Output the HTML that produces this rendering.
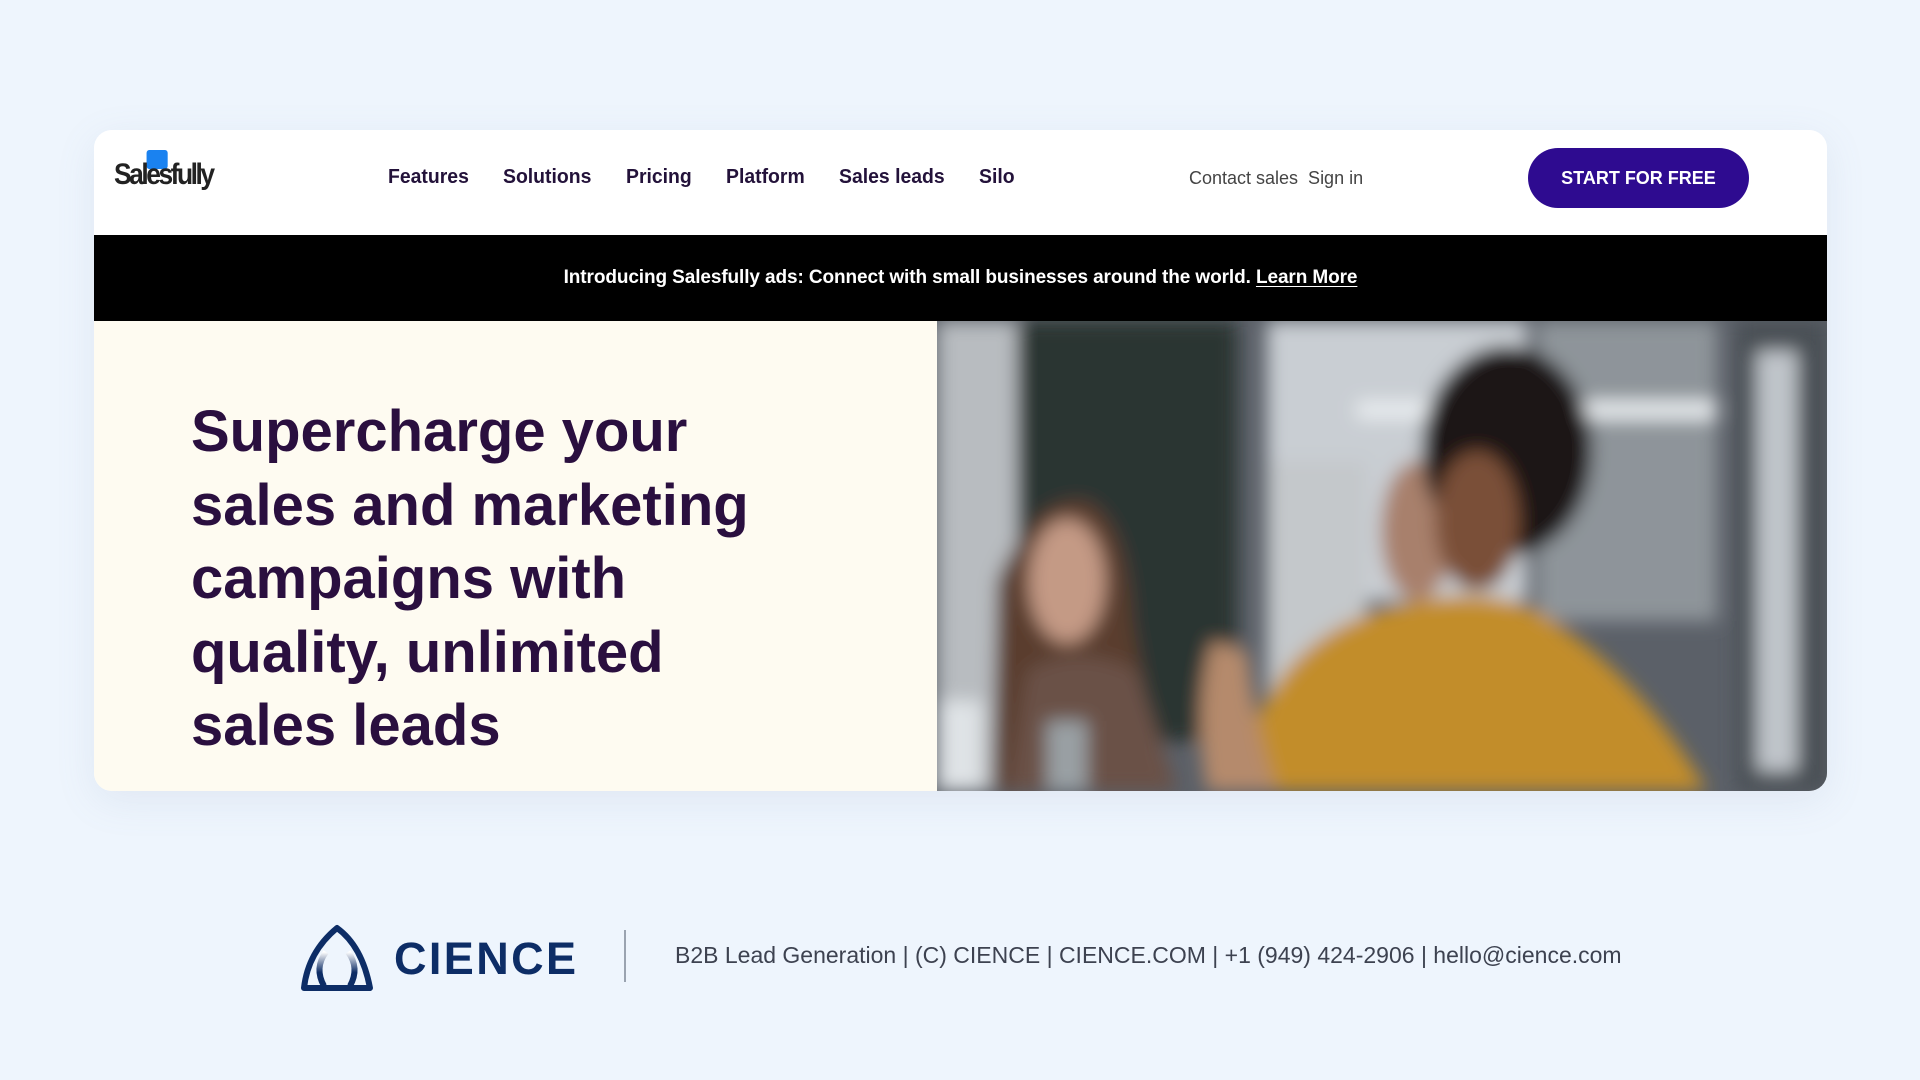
<!DOCTYPE html>
<html><head><meta charset="utf-8"><style>
*{margin:0;padding:0;box-sizing:border-box}
body{width:1920px;height:1080px;background:#eef5fd;font-family:"Liberation Sans",sans-serif;position:relative;overflow:hidden}
.card{position:absolute;left:94px;top:130px;width:1733px;height:661px;border-radius:18px;overflow:hidden;background:#fff;box-shadow:0 10px 40px rgba(120,140,170,.12)}
.nav{position:absolute;left:0;top:0;width:100%;height:105px;background:#fff}
.logo{position:absolute;left:20px;top:28px;font-size:30px;font-weight:bold;letter-spacing:-2.8px;color:#222;transform:scaleX(.88);transform-origin:left}
.logo i{position:absolute;left:37px;top:-8px;width:24px;height:19px;background:#1a82f0;border-radius:3px}
.logo span{position:relative}
.menu{position:absolute;top:36px;font-size:20px;font-weight:bold;color:#23123a;transform:scaleX(.97);transform-origin:left}
.cs{position:absolute;top:38px;left:1095px;font-size:18px;color:#444}
.btn{position:absolute;left:1434px;top:18px;width:221px;height:60px;border-radius:30px;background:#2e0b90;color:#fff;font-weight:bold;font-size:18px;text-align:center;line-height:60px}
.ban{position:absolute;left:0;top:105px;width:100%;height:86px;background:#000;color:#fff;font-size:19px;font-weight:bold;text-align:center;line-height:86px;letter-spacing:-.1px}
.ban u{text-underline-offset:3px}
.hero{position:absolute;left:0;top:191px;width:843px;height:470px;background:#fefbf1}
.hero h1{position:absolute;left:97px;top:74px;font-size:58px;line-height:73.5px;color:#2a0f3f;font-weight:bold}
.photo{position:absolute;left:843px;top:191px;width:890px;height:470px}
.cl{position:absolute;left:300px;top:922px}
.div{position:absolute;left:624px;top:930px;width:2px;height:52px;background:#9aa3b0}
.ft{position:absolute;left:675px;top:942px;font-size:23px;color:#3d4250}
</style></head><body>
<div class="card">
 <div class="nav">
  <div class="logo"><i></i><span>Salesfully</span></div>
  <div class="menu" style="left:294px">Features</div>
  <div class="menu" style="left:409px">Solutions</div>
  <div class="menu" style="left:532px">Pricing</div>
  <div class="menu" style="left:632px">Platform</div>
  <div class="menu" style="left:745px">Sales leads</div>
  <div class="menu" style="left:885px">Silo</div>
  <div class="cs">Contact sales&nbsp; Sign in</div>
  <div class="btn">START FOR FREE</div>
 </div>
 <div class="ban">Introducing Salesfully ads: Connect with small businesses around the world. <u>Learn More</u></div>
 <div class="hero"><h1>Supercharge your<br>sales and marketing<br>campaigns with<br>quality, unlimited<br>sales leads</h1></div>
 <svg class="photo" viewBox="0 0 890 470">
  <defs><filter id="b"><feGaussianBlur stdDeviation="9"/></filter></defs>
  <rect width="890" height="470" fill="#5b6068"/>
  <g filter="url(#b)">
   <rect x="0" y="0" width="80" height="470" fill="#b8bcc0"/>
   <rect x="80" y="0" width="220" height="420" fill="#2c3530"/>
   <rect x="330" y="0" width="260" height="280" fill="#c9ced3"/>
   <rect x="330" y="140" width="100" height="260" fill="#c4c8cb"/>
   <rect x="600" y="0" width="180" height="300" fill="#8e949a"/>
   <rect x="420" y="80" width="360" height="18" fill="#e8ecef"/>
   <rect x="800" y="0" width="90" height="470" fill="#4a4f55"/>
   <rect x="820" y="30" width="40" height="420" fill="#c0c5ca"/>
   <path d="M55 470 L60 260 Q100 170 150 180 Q190 200 195 300 L225 470Z" fill="#5a3e2e"/>
   <ellipse cx="130" cy="260" rx="38" ry="62" fill="#c49a85"/>
   <path d="M90 350 Q140 320 200 350 L240 470 L70 470Z" fill="#6b5146"/>
   <rect x="0" y="380" width="45" height="90" fill="#dfe3e6"/>
   <ellipse cx="480" cy="210" rx="36" ry="70" fill="#a8806c"/>
   <path d="M380 470 L400 340 Q460 310 530 330 L540 470Z" fill="#151a28"/>
   <path d="M300 470 Q320 330 440 290 Q540 260 600 290 Q700 350 770 470Z" fill="#c28d2b"/>
   <ellipse cx="570" cy="130" rx="85" ry="105" fill="#1d1917"/>
   <ellipse cx="540" cy="200" rx="42" ry="70" fill="#7a4f38"/>
   <path d="M270 470 Q255 380 275 320 L310 330 Q320 420 340 470Z" fill="#b58a6c"/>
   <rect x="110" y="400" width="40" height="70" fill="#9aa0a4"/>
  </g>
 </svg>
</div>
<svg class="cl" width="300" height="72" viewBox="0 0 300 72">
 <defs><linearGradient id="g" x1="0" y1="0" x2="0" y2="1"><stop offset="0" stop-color="#fff"/><stop offset=".6" stop-color="#0d2d66"/></linearGradient></defs>
 <path d="M37 6 Q62 24 70 66 L4 66 Q8 30 37 6Z" fill="none" stroke="#0d2d66" stroke-width="6" stroke-linejoin="round"/>
 <path d="M26 30 Q14 46 24 64 M48 30 Q60 46 50 64" fill="none" stroke="url(#g)" stroke-width="6"/>
 <text x="94" y="52" font-family="Liberation Sans, sans-serif" font-size="45" font-weight="bold" fill="#0d2d66" textLength="182" lengthAdjust="spacing">CIENCE</text>
</svg>
<div class="div"></div>
<div class="ft">B2B Lead Generation | (C) CIENCE | CIENCE.COM | +1 (949) 424-2906 | hello@cience.com</div>
</body></html>
